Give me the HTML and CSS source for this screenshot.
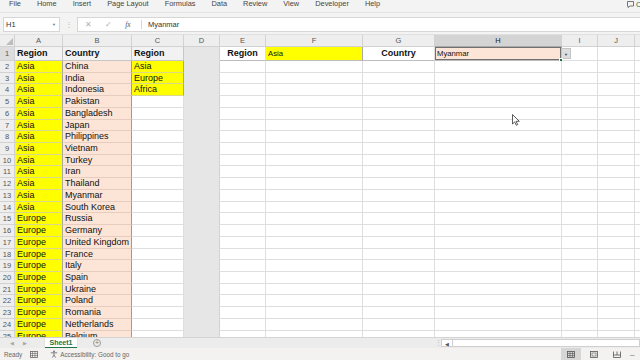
FILE: index.html
```html
<!DOCTYPE html>
<html lang="en">

<head>
    <meta charset="UTF-8">
    <meta name="viewport" content="width=device-width, initial-scale=1.0">
    <title>Book1 - Excel</title>

    <link rel="stylesheet" href="styles.css">
</head>

<body>

    <div class="app">

        <!-- Ribbon tabs -->
        <nav class="menu">
            <span>File</span>
            <span>Home</span>
            <span>Insert</span>
            <span>Page Layout</span>
            <span>Formulas</span>
            <span>Data</span>
            <span>Review</span>
            <span>View</span>
            <span>Developer</span>
            <span>Help</span>
            <span class="comments">
                <svg width="7" height="7" viewBox="0 0 7 7"><path d="M0.5 0.5h6v4.5h-3.5l-2 1.5v-1.5h-0.5z" fill="none" stroke="#555" stroke-width="0.8"/></svg>
                Comments
            </span>
        </nav>

        <!-- Formula bar -->
        <div class="formula-bar">
            <div class="name-box"><span>H1</span><span class="caret">&#9660;</span></div>
            <span class="dots">&#8942;</span>
            <div class="formula-input">
                <span class="fbtn">&#10005;</span>
                <span class="fbtn">&#10003;</span>
                <span class="fbtn fx">fx</span>
                <span class="sep"></span>
                <span class="value">Myanmar</span>
            </div>
        </div>

        <!-- Grid -->
        <section class="sheet">
            <div class="row head"><div class="corner"></div><div>A</div><div>B</div><div>C</div><div>D</div><div>E</div><div>F</div><div>G</div><div class="sel">H</div><div>I</div><div>J</div><div>K</div></div>
            <div class="row r1"><div class="rn sel">1</div><div class="hd">Region</div><div class="hd">Country</div><div class="hd">Region</div><div class="g"></div><div class="lbl">Region</div><div class="pick y">Asia</div><div class="lbl">Country</div><div class="pick s active">Myanmar<span class="dd">&#9660;</span><span class="handle"></span></div><div></div><div></div><div></div></div>
            <div class="row"><div class="rn">2</div><div class="y">Asia</div><div class="s">China</div><div class="y">Asia</div><div class="g"></div><div></div><div></div><div></div><div></div><div></div><div></div><div></div></div>
            <div class="row"><div class="rn">3</div><div class="y">Asia</div><div class="s">India</div><div class="y">Europe</div><div class="g"></div><div></div><div></div><div></div><div></div><div></div><div></div><div></div></div>
            <div class="row"><div class="rn">4</div><div class="y">Asia</div><div class="s">Indonesia</div><div class="y">Africa</div><div class="g"></div><div></div><div></div><div></div><div></div><div></div><div></div><div></div></div>
            <div class="row"><div class="rn">5</div><div class="y">Asia</div><div class="s">Pakistan</div><div></div><div class="g"></div><div></div><div></div><div></div><div></div><div></div><div></div><div></div></div>
            <div class="row"><div class="rn">6</div><div class="y">Asia</div><div class="s">Bangladesh</div><div></div><div class="g"></div><div></div><div></div><div></div><div></div><div></div><div></div><div></div></div>
            <div class="row"><div class="rn">7</div><div class="y">Asia</div><div class="s">Japan</div><div></div><div class="g"></div><div></div><div></div><div></div><div></div><div></div><div></div><div></div></div>
            <div class="row"><div class="rn">8</div><div class="y">Asia</div><div class="s">Philippines</div><div></div><div class="g"></div><div></div><div></div><div></div><div></div><div></div><div></div><div></div></div>
            <div class="row"><div class="rn">9</div><div class="y">Asia</div><div class="s">Vietnam</div><div></div><div class="g"></div><div></div><div></div><div></div><div></div><div></div><div></div><div></div></div>
            <div class="row"><div class="rn">10</div><div class="y">Asia</div><div class="s">Turkey</div><div></div><div class="g"></div><div></div><div></div><div></div><div></div><div></div><div></div><div></div></div>
            <div class="row"><div class="rn">11</div><div class="y">Asia</div><div class="s">Iran</div><div></div><div class="g"></div><div></div><div></div><div></div><div></div><div></div><div></div><div></div></div>
            <div class="row"><div class="rn">12</div><div class="y">Asia</div><div class="s">Thailand</div><div></div><div class="g"></div><div></div><div></div><div></div><div></div><div></div><div></div><div></div></div>
            <div class="row"><div class="rn">13</div><div class="y">Asia</div><div class="s">Myanmar</div><div></div><div class="g"></div><div></div><div></div><div></div><div></div><div></div><div></div><div></div></div>
            <div class="row"><div class="rn">14</div><div class="y">Asia</div><div class="s">South Korea</div><div></div><div class="g"></div><div></div><div></div><div></div><div></div><div></div><div></div><div></div></div>
            <div class="row"><div class="rn">15</div><div class="y">Europe</div><div class="s">Russia</div><div></div><div class="g"></div><div></div><div></div><div></div><div></div><div></div><div></div><div></div></div>
            <div class="row"><div class="rn">16</div><div class="y">Europe</div><div class="s">Germany</div><div></div><div class="g"></div><div></div><div></div><div></div><div></div><div></div><div></div><div></div></div>
            <div class="row"><div class="rn">17</div><div class="y">Europe</div><div class="s">United Kingdom</div><div></div><div class="g"></div><div></div><div></div><div></div><div></div><div></div><div></div><div></div></div>
            <div class="row"><div class="rn">18</div><div class="y">Europe</div><div class="s">France</div><div></div><div class="g"></div><div></div><div></div><div></div><div></div><div></div><div></div><div></div></div>
            <div class="row"><div class="rn">19</div><div class="y">Europe</div><div class="s">Italy</div><div></div><div class="g"></div><div></div><div></div><div></div><div></div><div></div><div></div><div></div></div>
            <div class="row"><div class="rn">20</div><div class="y">Europe</div><div class="s">Spain</div><div></div><div class="g"></div><div></div><div></div><div></div><div></div><div></div><div></div><div></div></div>
            <div class="row"><div class="rn">21</div><div class="y">Europe</div><div class="s">Ukraine</div><div></div><div class="g"></div><div></div><div></div><div></div><div></div><div></div><div></div><div></div></div>
            <div class="row"><div class="rn">22</div><div class="y">Europe</div><div class="s">Poland</div><div></div><div class="g"></div><div></div><div></div><div></div><div></div><div></div><div></div><div></div></div>
            <div class="row"><div class="rn">23</div><div class="y">Europe</div><div class="s">Romania</div><div></div><div class="g"></div><div></div><div></div><div></div><div></div><div></div><div></div><div></div></div>
            <div class="row"><div class="rn">24</div><div class="y">Europe</div><div class="s">Netherlands</div><div></div><div class="g"></div><div></div><div></div><div></div><div></div><div></div><div></div><div></div></div>
            <div class="row"><div class="rn">25</div><div class="y">Europe</div><div class="s">Belgium</div><div></div><div class="g"></div><div></div><div></div><div></div><div></div><div></div><div></div><div></div></div>
        </section>

        <!-- Sheet tabs + horizontal scroll -->
        <div class="tabs">
            <span class="nav">&#9664;</span>
            <span class="nav">&#9654;</span>
            <div class="tab">Sheet1</div>
            <span class="add">+</span>
            <span class="spacer"></span>
            <span class="split">&#8942;</span>
            <div class="hscroll">
                <span class="arrow">&#9664;</span>
                <span class="track"></span>
            </div>
        </div>

        <!-- Status bar -->
        <footer class="status">
            <span>Ready</span>
            <svg class="macro" width="8" height="7" viewBox="0 0 8 7"><rect x="0.5" y="0.5" width="7" height="6" fill="none" stroke="#666" stroke-width="0.8"/><path d="M2.5 0.5v6M5 0.5v6M0.5 2.5h7M0.5 4.5h7" stroke="#666" stroke-width="0.6"/></svg>
            <svg class="a11y" width="8" height="8" viewBox="0 0 8 8"><circle cx="4" cy="1.3" r="0.9" fill="#666"/><path d="M0.8 2.8h6.4M4 2.8v2.2M4 5l-1.6 2.6M4 5l1.6 2.6" stroke="#666" stroke-width="0.8" fill="none"/></svg>
            <span>Accessibility: Good to go</span>
            <div class="views">
                <span class="view on"><svg width="8" height="7" viewBox="0 0 8 7"><rect x="0.5" y="0.5" width="7" height="6" fill="none" stroke="#555" stroke-width="0.8"/><path d="M3 0.5v6M5.5 0.5v6M0.5 2.5h7M0.5 4.5h7" stroke="#555" stroke-width="0.6"/></svg></span>
                <span class="view"><svg width="8" height="7" viewBox="0 0 8 7"><rect x="0.5" y="0.5" width="7" height="6" fill="none" stroke="#555" stroke-width="0.8"/><rect x="2" y="2" width="4" height="3" fill="none" stroke="#555" stroke-width="0.6"/></svg></span>
                <span class="view"><svg width="8" height="7" viewBox="0 0 8 7"><path d="M0.5 0.5v6h7v-6M0.5 4h7M4 0.5v3.5" fill="none" stroke="#555" stroke-width="0.8"/></svg></span>
                <span class="zoom-out">&#8211;</span>
            </div>
        </footer>

        <svg class="cursor" width="8" height="12" viewBox="0 0 8 12"><path d="M0.5 0.5v9.5l2.2-2.1 1.6 3.4 1.4-0.7-1.6-3.3h3.2z" fill="#fff" stroke="#333" stroke-width="0.8"/></svg>
    </div>

</body>

</html>
```

FILE: styles.css
```css
/* Base */
* {
    box-sizing: border-box;
}

body {
    margin: 0;
    font-family: "Liberation Sans", Arial, sans-serif;
    background: #fff;
}

.app {
    position: relative;
    width: 640px;
    height: 360px;
    overflow: hidden;
    display: flex;
    flex-direction: column;
}

/* Ribbon tabs */
.menu {
    flex: none;
    height: 12px;
    display: flex;
    gap: 16px;
    padding-left: 9px;
    background: #f3f3f3;
    font-size: 7.4px;
    line-height: 7px;
    color: #454545;
    white-space: nowrap;
}

.comments {
    margin-left: auto;
    width: 13px;
    display: flex;
    gap: 2px;
    color: #217346;
    padding-top: 1px;
}

.comments svg {
    flex: none;
}

/* Formula bar */
.formula-bar {
    flex: none;
    height: 22px;
    display: flex;
    align-items: flex-start;
    padding: 4px 0 0 3px;
    background: #f3f3f3;
    border-top: 1px solid #e4e4e4;
}

.name-box {
    width: 57px;
    height: 15px;
    display: flex;
    justify-content: space-between;
    align-items: center;
    padding: 0 3px 0 2px;
    background: #fff;
    border: 1px solid #d6d6d6;
    font-size: 7.5px;
    color: #333;
}

.name-box .caret {
    font-size: 4px;
    color: #777;
}

.dots {
    width: 17px;
    text-align: center;
    font-size: 8px;
    line-height: 15px;
    color: #b8b8b8;
}

.formula-input {
    flex: 1;
    height: 15px;
    display: flex;
    align-items: center;
    background: #fff;
    border: 1px solid #d6d6d6;
    border-right: none;
    font-size: 7.5px;
    color: #333;
}

.fbtn {
    width: 20px;
    text-align: center;
    color: #b0b0b0;
}

.fx {
    font-family: "Liberation Serif", serif;
    font-style: italic;
    color: #555;
}

.sep {
    width: 1px;
    height: 9px;
    margin: 0 6px 0 3px;
    background: #d6d6d6;
}

/* Grid */
.sheet {
    flex: 1;
    overflow: hidden;
}

.row {
    display: grid;
    grid-template-columns: 15px 48px 69px 52px 36px 46px 97px 72px 127px 36px 37px 40px;
    height: 11.73px;
    font-size: 9px;
    line-height: 11px;
    color: #111;
}

.row > div {
    position: relative;
    padding: 0 2px;
    white-space: nowrap;
    overflow: hidden;
    border-right: 1px solid #dedede;
    border-bottom: 1px solid #dedede;
}

.row.head {
    height: 13px;
    font-size: 7.5px;
    line-height: 12px;
    color: #555;
    border-top: 1px solid #e0e0e0;
}

.row.head > div {
    text-align: center;
    background: #eeeeee;
    border-color: #d2d2d2;
}

.row.head > .sel {
    background: #d4d4d4;
    color: #222;
    border-bottom-color: #a9a9a9;
}

.row.head > .corner {
    background: #eeeeee;
}

.corner::after {
    content: "";
    position: absolute;
    right: 1px;
    bottom: 1px;
    border-left: 7px solid transparent;
    border-bottom: 7px solid #bdbdbd;
}

.row.r1 {
    height: 14px;
    line-height: 13px;
}

.row > .rn {
    padding: 0;
    text-align: center;
    font-size: 7.5px;
    color: #555;
    background: #eeeeee;
    border-color: #d2d2d2;
}

.row > .rn.sel {
    background: #dddddd;
}

/* Cell fills */
.row > .hd {
    font-weight: bold;
    background: #f2f2f2;
    border-color: #c6c6c6;
}

.row > .y {
    background: #ffff00;
    border-bottom-color: #d9d98c;
    border-right-color: #a8a8a0;
}

.row > .s {
    background: #fce4d6;
    border-bottom-color: #e6cdbf;
    border-right-color: #9c9c9c;
}

.row > .g {
    background: #e6e6e6;
    border-bottom-color: #e6e6e6;
    border-right-color: #d2d2d2;
}

.row > .lbl {
    font-weight: bold;
    text-align: center;
    border-bottom-color: #bcbcbc;
}

.row > .pick {
    font-size: 7.7px;
    overflow: visible;
    border-bottom-color: #bcbcbc;
}

.row > .active {
    box-shadow: inset 0 0 0 1px #707070;
}

.dd {
    position: absolute;
    left: 100%;
    top: 1px;
    width: 10px;
    height: 11px;
    line-height: 11px;
    text-align: center;
    font-size: 4px;
    color: #444;
    background: #dddddd;
    border: 1px solid #c4c4c4;
}

.handle {
    position: absolute;
    right: -2px;
    bottom: -2px;
    width: 4px;
    height: 4px;
    background: #217346;
    border: 1px solid #fff;
}

/* Sheet tabs */
.tabs {
    flex: none;
    height: 11px;
    display: flex;
    align-items: stretch;
    padding-left: 5px;
    background: #ececec;
    border-top: 1px solid #d4d4d4;
    font-size: 5px;
    line-height: 10px;
    color: #a6a6a6;
}

.nav {
    width: 13px;
    text-align: center;
}

.tab {
    margin-left: 14px;
    width: 32px;
    text-align: center;
    font-size: 7px;
    font-weight: bold;
    color: #217346;
    background: #fff;
    border-bottom: 1px solid #217346;
    box-shadow: 0 0 1px #bbb;
}

.add {
    margin-left: 16px;
    width: 8px;
    height: 8px;
    margin-top: 1px;
    border: 1px solid #9a9a9a;
    border-radius: 50%;
    font-size: 7px;
    line-height: 6px;
    text-align: center;
    color: #777;
}

.spacer {
    flex: 1;
}

.split {
    width: 6px;
    font-size: 7px;
    text-align: center;
    color: #b5b5b5;
}

.hscroll {
    width: 199px;
    display: flex;
    align-items: stretch;
    padding: 1px 0;
}

.arrow {
    width: 12px;
    text-align: center;
    color: #555;
    line-height: 8px;
    background: #fff;
    border: 1px solid #cfcfcf;
}

.track {
    flex: 1;
    background: #fff;
    border: 1px solid #cfcfcf;
    border-left: none;
}

/* Status bar */
.status {
    flex: none;
    height: 12px;
    display: flex;
    align-items: center;
    padding-left: 4px;
    background: #f3f2f1;
    font-size: 6.3px;
    color: #666;
    white-space: nowrap;
}

.macro {
    margin-left: 8px;
}

.a11y {
    margin: 0 2px 0 12px;
}

.views {
    margin-left: auto;
    display: flex;
    align-items: center;
    height: 100%;
}

.view {
    width: 20px;
    height: 100%;
    display: flex;
    align-items: center;
    justify-content: center;
    margin-right: 3px;
}

.view.on {
    background: #d6d6d6;
}

.zoom-out {
    width: 10px;
    font-size: 8px;
    color: #666;
}

/* Mouse pointer over the grid */
.cursor {
    position: absolute;
    left: 512px;
    top: 114px;
}
```
